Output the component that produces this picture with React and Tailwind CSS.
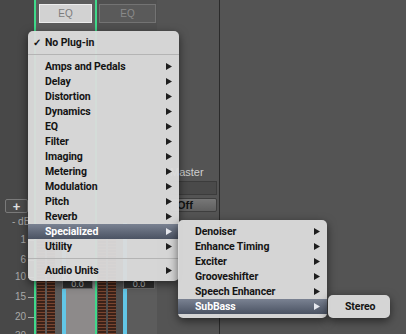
import React from 'react';

const Arrow = ({ light }) => (
  <svg width="6" height="7" viewBox="0 0 6 7" className="shrink-0">
    <path d="M0 0L6 3.5L0 7Z" fill={light ? '#e6e8ee' : '#1e1e1e'} />
  </svg>
);

const Row = ({ label, arrow, selected, check }) => (
  <div
    className={`h-[15px] flex items-center pl-[5px] pr-[7px] ${
      selected ? 'bg-gradient-to-b from-[#7a8292] to-[#4b5363] text-white' : 'text-[#141414]'
    }`}
  >
    <span className="w-[12px] text-[10px] leading-none">{check ? '✓' : ''}</span>
    <span className="flex-1 whitespace-nowrap">{label}</span>
    {arrow && <Arrow light={selected} />}
  </div>
);

const Sep = () => (
  <div className="h-[9px] flex items-center">
    <div className="h-px w-full bg-[#b4b4b4]" />
  </div>
);

const Meter = () => (
  <div className="w-[8px] h-full bg-[repeating-linear-gradient(to_bottom,#7a4630_0px,#7a4630_1px,#3b2219_1px,#3b2219_3px)]" />
);

const categories = [
  'Amps and Pedals', 'Delay', 'Distortion', 'Dynamics', 'EQ', 'Filter', 'Imaging',
  'Metering', 'Modulation', 'Pitch', 'Reverb', 'Specialized', 'Utility',
];

const specialized = ['Denoiser', 'Enhance Timing', 'Exciter', 'Grooveshifter', 'Speech Enhancer', 'SubBass'];

const Strip = ({ active }) => (
  <div
    className={`flex flex-col h-full ${
      active ? 'w-[63px] border-x-2 border-[#3fd98a] bg-[#5c5c5c]' : 'w-[60px] bg-[#505050]'
    }`}
  >
    <div className={`mt-[4px] h-[19px] flex items-center justify-center text-[10px] ${
      active ? 'mx-[3px] bg-[#d2d2d2] border border-[#ededed] text-[#7c7c7c]' : 'ml-[2px] mr-[1px] bg-[#5a5a5a] border border-[#737373] text-[#8a8a8a]'
    }`}>
      EQ
    </div>
    <div className="h-[200px]" />
    <div className="flex-1 flex">
      <div className="flex gap-[2px] pl-[1px] pt-[8px]">
        <Meter />
        <Meter />
      </div>
      <div className={`flex-1 ml-[7px] flex flex-col ${active ? 'bg-[#8d8a8a]' : 'bg-[#5c5c5c]'}`}>
        <div className="h-[57px] border-l-4 border-[#62c6e6]" />
        <div className="h-[9px] bg-[#2e2e2e] border border-[#6a6a6a] text-[#bdbdbd] text-[9px] leading-none flex items-center justify-center mr-[2px]">
          0.0
        </div>
        <div className="flex-1 border-l-4 border-[#62c6e6]" />
      </div>
    </div>
  </div>
);

export default function App() {
  return (
    <div className="relative w-[406px] h-[334px] overflow-hidden bg-[#545454] font-['Liberation_Sans',Arial,sans-serif]">
      {/* Mixer */}
      <div className="flex h-full">
        <div className="w-[34px] bg-[#484848] flex flex-col text-[#a9a9a9] text-[10px] leading-none">
          <div className="mt-[199px] ml-[5px] w-[23px] h-[14px] bg-[#4c4c4c] border border-[#7a7a7a] rounded-[2px] flex items-center justify-center text-[#e0e0e0] text-[13px] font-bold">
            +
          </div>
          <div className="mt-[4px] pl-[12px] whitespace-nowrap">- dB</div>
          {[['1', 8], ['6', 10], ['10', 7], ['15', 10], ['20', 10], ['30', 9]].map(([n, m]) => (
            <div key={n} style={{ marginTop: m }} className="flex items-center justify-end">
              <span className="pr-[2px]">{n}</span>
              <span className="w-[6px] h-px bg-[#a9a9a9]" />
            </div>
          ))}
        </div>
        <Strip active />
        <Strip />
        <div className="w-[62px] flex flex-col pl-[13px] pr-[2px]">
          <div className="mt-[167px] text-[11px] text-[#cfcfcf] leading-none">Master</div>
          <div className="mt-[3px] h-[14px] bg-[#4a4a4a] border border-[#3c3c3c]" />
          <div className="mt-[3px] h-[14px] bg-gradient-to-b from-[#777] to-[#5f5f5f] border border-[#3e3e3e] rounded-[2px] text-[11px] font-bold text-[#111] flex items-center pl-[6px]">
            Off
          </div>
        </div>
        <div className="w-px bg-[#2b2b2b]" />
        <div className="flex-1" />
      </div>

      {/* Plug-in menu */}
      <div className="absolute left-[28px] top-[31px] w-[151px] pt-[4px] pb-[3px] rounded-[5px] bg-[#dcdcdc]/95 shadow-[0_3px_10px_rgba(0,0,0,0.55)] font-['Roboto',sans-serif] font-bold text-[10.5px] tracking-[-0.1px]">
        <Row label="No Plug-in" check />
        <Sep />
        {categories.map((c) => (
          <Row key={c} label={c} arrow selected={c === 'Specialized'} />
        ))}
        <Sep />
        <Row label="Audio Units" arrow />
      </div>

      {/* Specialized submenu */}
      <div className="absolute left-[178px] top-[220px] w-[149px] pt-[4px] pb-[4px] rounded-[5px] bg-[#dcdcdc]/95 shadow-[0_3px_10px_rgba(0,0,0,0.55)] font-['Roboto',sans-serif] font-bold text-[10.5px] tracking-[-0.1px]">
        {specialized.map((s) => (
          <Row key={s} label={s} arrow selected={s === 'SubBass'} />
        ))}
      </div>

      {/* SubBass submenu */}
      <div className="absolute left-[328px] top-[295px] w-[62px] pt-[4px] pb-[4px] rounded-[5px] bg-[#dcdcdc]/95 shadow-[0_3px_10px_rgba(0,0,0,0.55)] font-['Roboto',sans-serif] font-bold text-[10.5px] tracking-[-0.1px]">
        <Row label="Stereo" />
      </div>
    </div>
  );
}
